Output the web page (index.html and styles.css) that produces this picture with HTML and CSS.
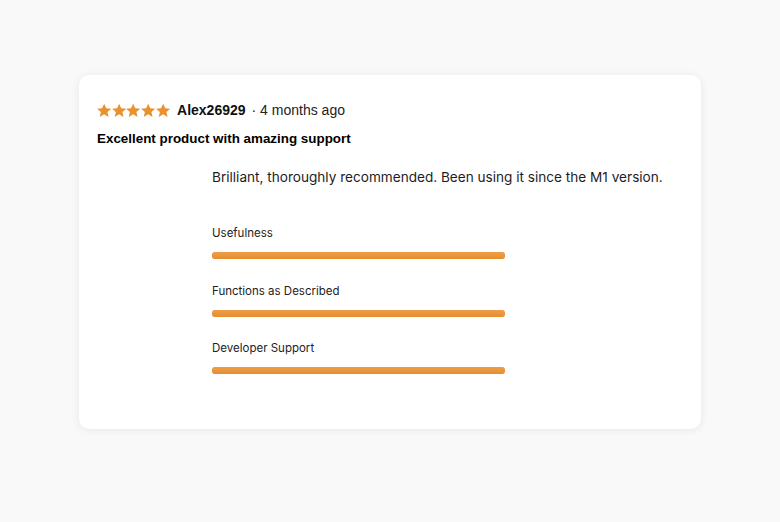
FILE: index.html
```html
<!DOCTYPE html>
<html lang="en">
<head>
    <meta charset="UTF-8">
    <meta name="viewport" content="width=device-width, initial-scale=1.0">
    <title>Review</title>
    <link rel="stylesheet" href="styles.css">
</head>
<body>
    <div class="review-card">
        <div class="review-head">
            <div class="stars">
                <svg viewBox="1.2 1.2 21.6 20.6"><path d="M12 1.5l3.1 7 7.6.7-5.8 5 1.8 7.4L12 17.7l-6.7 3.9 1.8-7.4-5.8-5 7.6-.7z"/></svg>
                <svg viewBox="1.2 1.2 21.6 20.6"><path d="M12 1.5l3.1 7 7.6.7-5.8 5 1.8 7.4L12 17.7l-6.7 3.9 1.8-7.4-5.8-5 7.6-.7z"/></svg>
                <svg viewBox="1.2 1.2 21.6 20.6"><path d="M12 1.5l3.1 7 7.6.7-5.8 5 1.8 7.4L12 17.7l-6.7 3.9 1.8-7.4-5.8-5 7.6-.7z"/></svg>
                <svg viewBox="1.2 1.2 21.6 20.6"><path d="M12 1.5l3.1 7 7.6.7-5.8 5 1.8 7.4L12 17.7l-6.7 3.9 1.8-7.4-5.8-5 7.6-.7z"/></svg>
                <svg viewBox="1.2 1.2 21.6 20.6"><path d="M12 1.5l3.1 7 7.6.7-5.8 5 1.8 7.4L12 17.7l-6.7 3.9 1.8-7.4-5.8-5 7.6-.7z"/></svg>
            </div>
            <span class="author">Alex26929</span>
            <span class="date">· 4 months ago</span>
        </div>

        <h2 class="review-title">Excellent product with amazing support</h2>

        <div class="review-body">
            <p class="review-text">Brilliant, thoroughly recommended. Been using it since the M1 version.</p>

            <div class="ratings">
                <div class="rating">
                    <div class="rating-label">Usefulness</div>
                    <div class="bar"><div class="bar-fill" style="width: 100%"></div></div>
                </div>
                <div class="rating">
                    <div class="rating-label">Functions as Described</div>
                    <div class="bar"><div class="bar-fill" style="width: 100%"></div></div>
                </div>
                <div class="rating">
                    <div class="rating-label">Developer Support</div>
                    <div class="bar"><div class="bar-fill" style="width: 100%"></div></div>
                </div>
            </div>
        </div>
    </div>
</body>
</html>
```

FILE: styles.css
```css
:root {
    --orange: #e8912f;
    --text: #1d1d1f;
}

* {
    box-sizing: border-box;
    margin: 0;
    padding: 0;
}

body {
    background-color: #f9f9f9;
    font-family: 'Liberation Sans', Arial, sans-serif;
    color: var(--text);
    padding: 75px 79px;
}

.review-card {
    width: 622px;
    height: 354px;
    background: white;
    border-radius: 10px;
    box-shadow: 0 1px 8px rgba(0, 0, 0, 0.08);
    padding: 26px 18px 0 18px;
}

.review-head {
    display: flex;
    align-items: center;
    height: 18px;
}

.stars {
    display: flex;
    gap: 0.4px;
    margin-right: 7px;
}

.stars svg {
    width: 14.3px;
    height: 14.5px;
    fill: var(--orange);
}

.author {
    font-size: 14px;
    font-weight: bold;
    color: #111;
    margin-right: 6px;
}

.date {
    font-size: 14px;
    color: #222;
}

.review-title {
    font-size: 13.4px;
    font-weight: bold;
    color: #000;
    margin-top: 12px;
    line-height: 16px;
}

.review-body {
    padding-left: 115px;
}

.review-text {
    font-family: Inter, 'Liberation Sans', sans-serif;
    font-size: 13.6px;
    color: var(--text);
    margin-top: 21px;
    line-height: 18px;
}

.ratings {
    margin-top: 40px;
}

.rating {
    margin-bottom: 24.5px;
}

.rating-label {
    font-family: Inter, 'Liberation Sans', sans-serif;
    font-size: 11.5px;
    color: #222;
    line-height: 14px;
}

.bar {
    width: 293px;
    height: 7px;
    margin-top: 12px;
    border-radius: 2px;
    overflow: hidden;
}

.bar-fill {
    height: 100%;
    background: linear-gradient(#ee9d48, #e58e2f);
    border-radius: 2px;
}
```
